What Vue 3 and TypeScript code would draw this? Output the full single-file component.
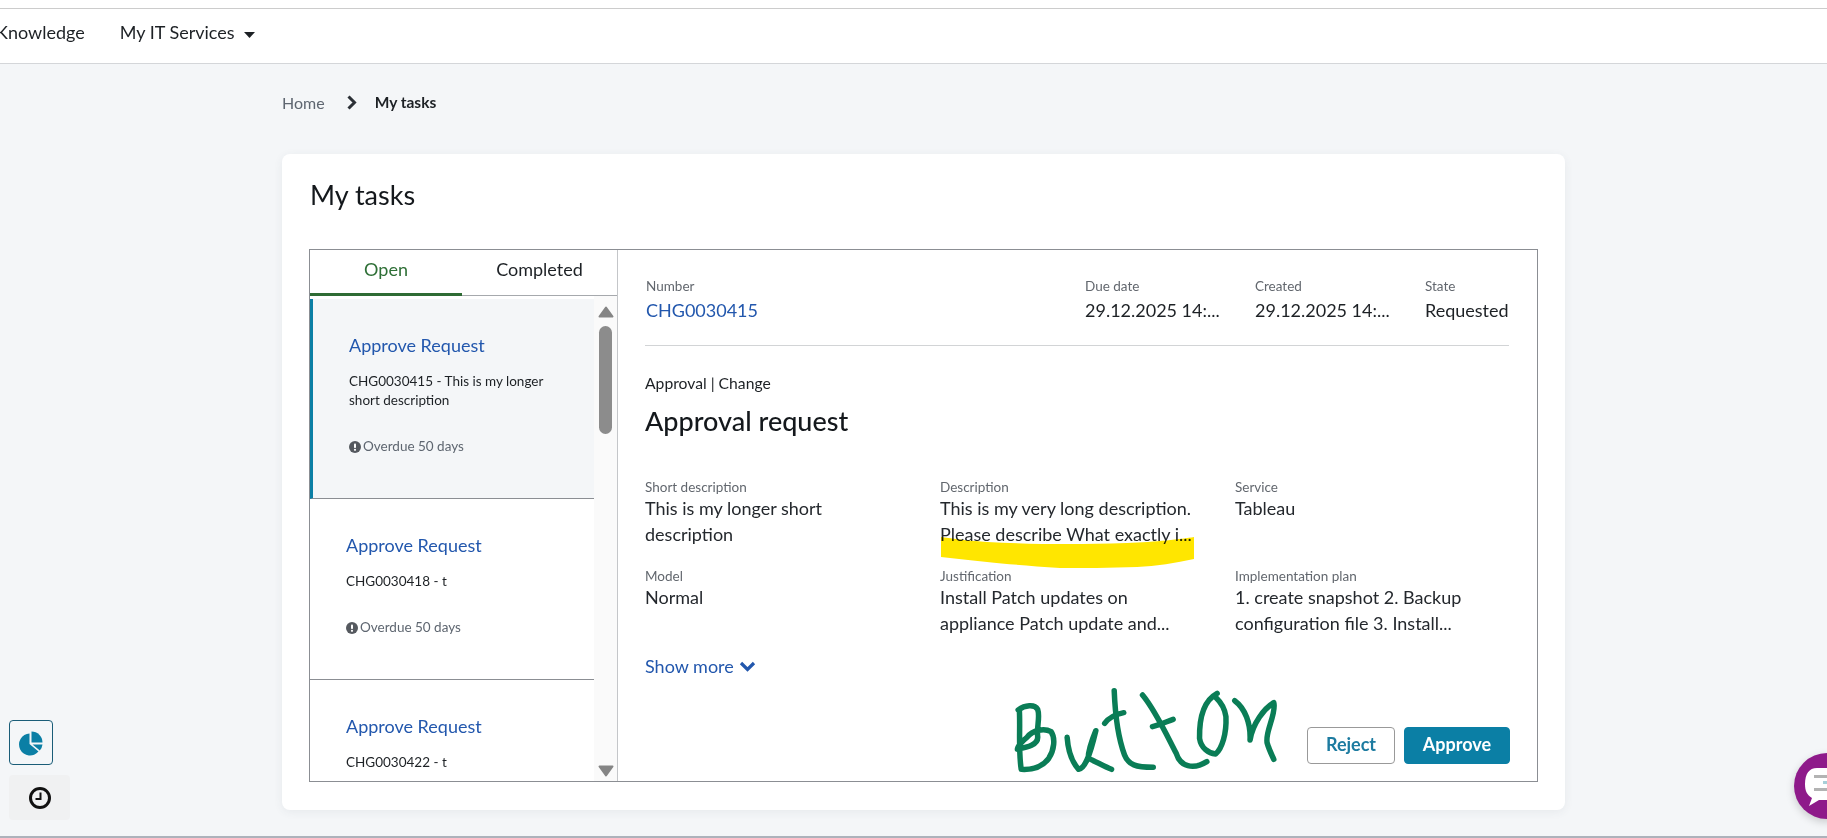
<script setup lang="ts">
interface Task { title: string; text: string; overdue?: string; active?: boolean }
const tasks: Task[] = [
  { title: 'Approve Request', text: 'CHG0030415 - This is my longer short description', overdue: 'Overdue 50 days', active: true },
  { title: 'Approve Request', text: 'CHG0030418 - t', overdue: 'Overdue 50 days' },
  { title: 'Approve Request', text: 'CHG0030422 - t' }
]
const meta = [
  { label: 'Due date', value: '29.12.2025 14:...' },
  { label: 'Created', value: '29.12.2025 14:...' },
  { label: 'State', value: 'Requested' }
]
const fields = [
  { label: 'Short description', value: 'This is my longer short description' },
  { label: 'Description', value: 'This is my very long description. Please describe What exactly i...' },
  { label: 'Service', value: 'Tableau' },
  { label: 'Model', value: 'Normal' },
  { label: 'Justification', value: 'Install Patch updates on appliance Patch update and...' },
  { label: 'Implementation plan', value: '1. create snapshot 2. Backup configuration file 3. Install...' }
]
</script>

<template>
  <div class="page">
    <div class="strip"></div>
    <nav class="nav">
      <span class="nav-item first">Knowledge</span>
      <span class="nav-item">My IT Services</span>
      <svg class="caret" width="11" height="6" viewBox="0 0 11 6"><path d="M0 0h11L5.5 6z" fill="#1d2125" /></svg>
    </nav>

    <main class="main">
      <div class="crumbs">
        <span class="home">Home</span>
        <svg class="crumb-chev" width="11" height="15" viewBox="0 0 11 15"><path d="M2.5 1.5 8.5 7.5 2.5 13.5" fill="none" stroke="#2b3036" stroke-width="3" /></svg>
        <span class="here">My tasks</span>
      </div>

      <section class="card">
        <h1 class="heading">My tasks</h1>
        <div class="frame">
          <aside class="left">
            <div class="tabs">
              <div class="tab on">Open</div>
              <div class="tab">Completed</div>
            </div>
            <div class="list-wrap">
              <div class="list">
                <article v-for="t in tasks" :key="t.text" class="item" :class="{ active: t.active }">
                  <a class="item-title">{{ t.title }}</a>
                  <p class="item-text">{{ t.text }}</p>
                  <p v-if="t.overdue" class="overdue">
                    <svg width="12" height="12" viewBox="0 0 12 12"><circle cx="6" cy="6" r="6" fill="#55595f" /><rect x="5" y="2.4" width="2" height="4.6" rx="0.8" fill="#fff" /><circle cx="6" cy="8.8" r="1.1" fill="#fff" /></svg>
                    {{ t.overdue }}
                  </p>
                </article>
              </div>
              <div class="scroll">
                <svg class="arrow-up" width="16" height="12" viewBox="0 0 16 12"><path d="M8 1.5 14.5 10.5H1.5z" fill="#858585" stroke="#858585" stroke-width="2" stroke-linejoin="round" /></svg>
                <div class="thumb"></div>
                <svg class="arrow-down" width="16" height="12" viewBox="0 0 16 12"><path d="M1.5 1.5H14.5L8 10.5z" fill="#858585" stroke="#858585" stroke-width="2" stroke-linejoin="round" /></svg>
              </div>
            </div>
          </aside>

          <div class="detail">
            <div class="meta">
              <div class="meta-first">
                <div class="label">Number</div>
                <a class="number">CHG0030415</a>
              </div>
              <div v-for="m in meta" :key="m.label" class="meta-col">
                <div class="label">{{ m.label }}</div>
                <div class="value">{{ m.value }}</div>
              </div>
            </div>
            <div class="kind">Approval | Change</div>
            <h2 class="title">Approval request</h2>
            <div class="fields">
              <div v-for="f in fields" :key="f.label" class="field">
                <div class="label">{{ f.label }}</div>
                <div class="field-value">{{ f.value }}</div>
              </div>
            </div>
            <a class="more">Show more
              <svg width="17" height="11" viewBox="0 0 17 11"><path d="M2 2 8.5 8.5 15 2" fill="none" stroke="#2257ad" stroke-width="3.2" /></svg>
            </a>
            <div class="actions">
              <button class="btn reject">Reject</button>
              <button class="btn approve">Approve</button>
            </div>
            <svg class="marker" width="254" height="32" viewBox="0 0 254 32"><path d="M0 0C15 2 30 4 46 5C90 7 130 8 186 6C215 5 240 2 253 0V22C235 26 215 29 196 30C170 31 140 31 119 31C90 29 65 27 46 25C30 23 15 22 0 20Z" fill="#ffe600" /></svg>
            <svg class="scrawl" width="600" height="178" viewBox="0 0 1568 534" preserveAspectRatio="none">
              <g fill="none" stroke="#0a7d56" stroke-width="5.5" stroke-linecap="round" stroke-linejoin="round">
                <path vector-effect="non-scaling-stroke" d="M155 148C158 200 152 270 160 328C190 330 215 322 232 295C246 270 250 235 238 215C220 203 190 210 175 232C160 245 150 262 150 268C175 262 205 255 203 230C200 200 210 170 203 148C195 132 170 135 152 150" />
                <path vector-effect="non-scaling-stroke" d="M280 232C282 265 288 300 310 328C325 325 338 295 355 212C345 240 335 270 335 295C355 305 375 318 396 328" />
                <path vector-effect="non-scaling-stroke" d="M403 92C405 150 412 230 430 285C440 315 460 322 505 322M378 190C390 172 410 162 428 158" />
                <path vector-effect="non-scaling-stroke" d="M477 105C510 150 540 225 565 280C575 320 610 330 645 305M503 200C520 195 540 185 557 178" />
                <path vector-effect="non-scaling-stroke" d="M672 100C640 120 625 170 626 235C630 265 650 280 668 282C685 265 697 220 695 170C692 145 680 125 668 112" />
                <path vector-effect="non-scaling-stroke" d="M718 122C745 145 760 190 758 240C765 190 795 145 820 128C828 160 795 220 803 250C808 270 815 285 820 298" />
              </g>
            </svg>
          </div>
        </div>
      </section>
    </main>

    <div class="side-btn chart">
      <svg width="26" height="26" viewBox="0 0 26 26">
        <path d="M11.5 3.5A11 11 0 1 0 20.5 21.5L11.5 14Z" fill="#0b7fa5" />
        <path d="M13.5 1.5A11 11 0 0 1 24.5 12.5H13.5Z" fill="#0b7fa5" />
        <path d="M14.5 14.5H24.5A11 11 0 0 1 21.8 20.5Z" fill="#0b7fa5" />
      </svg>
    </div>
    <div class="side-btn clock">
      <svg width="24" height="24" viewBox="0 0 24 24"><circle cx="12" cy="12" r="9.5" fill="none" stroke="#111" stroke-width="3" /><path d="M12.5 6.5V13H7.5" fill="none" stroke="#111" stroke-width="2" /></svg>
    </div>
    <div class="chat">
      <svg class="chat-glyph" width="33" height="42" viewBox="0 0 33 42">
        <path d="M12 2H33V34H14L4 40 7 32C2 29 0 25 0 18 0 8 4 2 12 2Z" fill="#fff" />
        <rect x="9" y="9" width="24" height="3" fill="#b3b3b3" />
        <rect x="18" y="15" width="15" height="3" fill="#a8cfd8" />
        <rect x="9" y="22" width="24" height="3" fill="#b3b3b3" />
      </svg>
    </div>
  </div>
</template>

<style>
html, body { margin: 0; padding: 0; }
</style>

<style scoped>
.page {
  position: relative;
  width: 1827px;
  height: 838px;
  box-sizing: border-box;
  overflow: hidden;
  background: #f4f6f8;
  border-bottom: 2px solid #adb2bb;
  font-family: Lato, "Open Sans", sans-serif;
  color: #1d2125;
}
.strip { height: 8px; background: #fff; border-bottom: 1px solid #ccc; }
.nav {
  height: 55px;
  box-sizing: border-box;
  display: flex;
  align-items: center;
  background: #fff;
  border-bottom: 1px solid #d4d6d9;
  font-size: 18px;
  padding-bottom: 8px;
}
.nav-item.first { margin-left: -4px; margin-right: 35px; }
.caret { margin-left: 9px; margin-top: 5px; }
.main { margin-left: 282px; width: 1283px; }
.crumbs {
  height: 90px;
  box-sizing: border-box;
  display: flex;
  align-items: center;
  padding-bottom: 14px;
  font-size: 16px;
}
.home { color: #5e6670; }
.crumb-chev { margin: 0 18px 0 21px; }
.here { font-weight: 700; color: #1d2125; font-size: 15.5px; }
.card {
  height: 656px;
  box-sizing: border-box;
  background: #fff;
  border-radius: 8px;
  box-shadow: 0 2px 10px rgba(60, 70, 85, 0.07);
  padding: 0 27px 0 27px;
}
.heading {
  margin: 0;
  height: 95px;
  box-sizing: border-box;
  padding: 22px 0 0 1px;
  font-size: 27px;
  line-height: 38px;
  font-weight: 400;
  color: #14181c;
}
.frame {
  height: 533px;
  box-sizing: border-box;
  display: flex;
  border: 1px solid #8b8e93;
}
.left { width: 307px; flex: none; display: flex; flex-direction: column; border-right: 1px solid #c4c6c9; }
.tabs { display: flex; height: 46px; flex: none; border-bottom: 1px solid #a6a9ad; box-sizing: border-box; }
.tab {
  flex: 1;
  text-align: center;
  font-size: 18px;
  line-height: 38px;
  color: #1d2125;
}
.tab.on { color: #2e6f36; border-bottom: 3px solid #2e6b34; margin-bottom: -1px; flex: 0 0 152px; }
.list-wrap { flex: 1; min-height: 0; display: flex; padding-top: 3px; }
.list { flex: 1; min-width: 0; overflow: hidden; }
.item {
  box-sizing: border-box;
  height: 181px;
  padding: 35px 40px 0 36px;
  border-bottom: 1px solid #8b8e93;
}
.item.active {
  height: 200px;
  background: #f4f6f8;
  border-left: 3px solid #0b7fa5;
  padding-left: 36px;
}
.item-title { display: block; color: #2257ad; font-size: 18px; line-height: 22px; }
.item-text { margin: 16px 0 0; font-size: 13.5px; line-height: 19px; color: #1d2125; }
.overdue {
  margin: 27px 0 0;
  display: flex;
  align-items: center;
  gap: 2px;
  font-size: 13.5px;
  line-height: 19px;
  color: #5e6670;
}
.scroll {
  width: 23px;
  flex: none;
  margin-top: -3px;
  background: #fafafa;
  display: flex;
  flex-direction: column;
  align-items: center;
  box-sizing: border-box;
  padding-top: 10px;
}
.arrow-up, .arrow-down { flex: none; }
.thumb { width: 13px; height: 108px; margin-top: 8px; border-radius: 7px; background: #8c8c8c; }
.arrow-down { margin-top: auto; margin-bottom: 4px; }
.detail { position: relative; flex: 1; min-width: 0; padding: 0 28px 0 27px; }
.meta {
  display: flex;
  height: 96px;
  box-sizing: border-box;
  padding-top: 28px;
  border-bottom: 1px solid #d2d4d6;
}
.meta-first { width: 439px; flex: none; padding-left: 1px; }
.meta-col { width: 170px; flex: none; }
.meta-col:last-child { width: 80px; white-space: nowrap; }
.label { font-size: 13.5px; line-height: 17px; color: #62676e; }
.number, .value { display: block; margin-top: 4px; font-size: 18px; line-height: 22px; }
.number { color: #2257ad; }
.kind { margin-top: 26px; font-size: 15.7px; line-height: 22px; }
.title { margin: 8px 0 0; font-size: 27px; line-height: 38px; font-weight: 500; color: #14181c; }
.fields {
  display: grid;
  grid-template-columns: 295px 295px 260px;
  grid-template-rows: 89px 89px;
  margin-top: 39px;
}
.field-value { width: 262px; margin-top: -1px; font-size: 18px; line-height: 26px; color: #24282d; }
.more {
  display: flex;
  align-items: center;
  gap: 5px;
  margin-top: -3px;
  height: 24px;
  color: #2257ad;
  font-size: 18px;
}
.actions { display: flex; justify-content: flex-end; gap: 9px; margin-top: 49px; margin-right: -1px; }
.btn {
  height: 37px;
  box-sizing: border-box;
  border-radius: 4px;
  font: 700 18px Lato, sans-serif;
  padding: 0 0 3px;
}
.reject { width: 88px; background: #fff; border: 1px solid #999; color: #1d7ba0; }
.approve { width: 106px; background: #0b7fa5; border: 1px solid #0b7fa5; color: #fff; }
.marker { position: absolute; left: 323px; top: 287px; mix-blend-mode: multiply; }
.scrawl { position: absolute; left: 342px; top: 410px; pointer-events: none; }
.side-btn {
  position: absolute;
  display: flex;
  align-items: center;
  justify-content: center;
  box-sizing: border-box;
}
.chart { left: 9px; top: 720px; width: 44px; height: 45px; border: 1px solid #1a5d78; border-radius: 4px; }
.clock { left: 9px; top: 775px; width: 61px; height: 45px; background: #f0f1f2; border-radius: 4px; }
.chat {
  position: absolute;
  left: 1794px;
  top: 753px;
  width: 66px;
  height: 66px;
  border-radius: 50%;
  background: #8e1a8a;
  box-shadow: 0 3px 8px rgba(0, 0, 0, 0.18);
}
.chat-glyph { position: absolute; left: 11px; top: 13px; }
</style>
